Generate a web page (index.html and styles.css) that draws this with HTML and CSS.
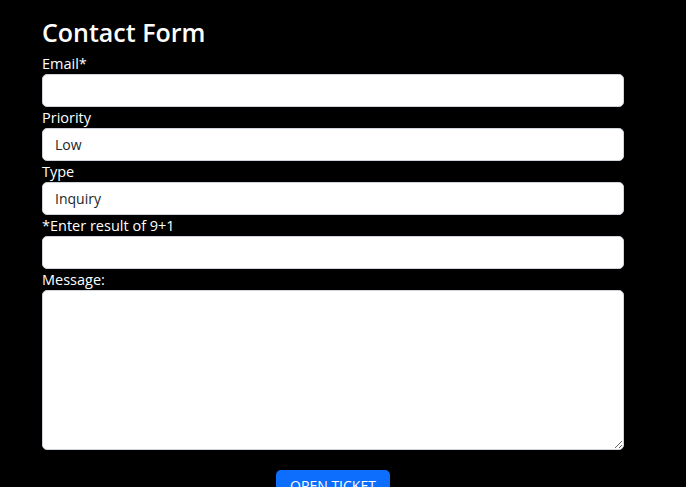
FILE: index.html
```html
<!DOCTYPE html>
<html lang="en">
<head>
    <meta charset="UTF-8">
    <meta name="viewport" content="width=device-width, initial-scale=1.0">
    <title>Contact Form</title>
    <link rel="stylesheet" href="styles.css">
</head>
<body>
    <div class="container">
        <h1>Contact Form</h1>
        <form class="contact-form">
            <label for="email">Email*</label>
            <input type="email" id="email" name="email">

            <label for="priority">Priority</label>
            <select id="priority" name="priority">
                <option>Low</option>
                <option>Medium</option>
                <option>High</option>
            </select>

            <label for="type">Type</label>
            <select id="type" name="type">
                <option>Inquiry</option>
                <option>Support</option>
            </select>

            <label for="captcha">*Enter result of 9+1</label>
            <input type="text" id="captcha" name="captcha">

            <label for="message">Message:</label>
            <textarea id="message" name="message"></textarea>

            <div class="actions">
                <button type="submit">OPEN TICKET</button>
            </div>
        </form>
    </div>
</body>
</html>
```

FILE: styles.css
```css
body {
    font-family: "Open Sans", "Noto Sans", sans-serif;
    background-color: #000;
    color: #fff;
    margin: 0;
    padding: 0;
}
.container {
    width: 582px;
    margin-left: 42px;
    padding-top: 15px;
}
h1 {
    font-size: 25px;
    font-weight: 600;
    line-height: 34px;
    margin: 0 0 4px 0;
}
.contact-form label {
    display: block;
    font-size: 14.5px;
    line-height: 21px;
}
.contact-form input,
.contact-form select,
.contact-form textarea {
    display: block;
    width: 100%;
    box-sizing: border-box;
    height: 33px;
    padding: 4px 12px;
    font-family: inherit;
    font-size: 14px;
    color: #212529;
    background-color: #fff;
    border: 1px solid #ced4da;
    border-radius: 5px;
    margin: 0;
    -webkit-appearance: none;
    appearance: none;
}
.contact-form textarea {
    height: 160px;
    resize: vertical;
}
.actions {
    display: flex;
    justify-content: center;
    margin-top: 20px;
}
.actions button {
    background-color: #0d6efd;
    color: #fff;
    border: none;
    border-radius: 5px;
    padding: 6px 12px;
    width: 114px;
    font-family: inherit;
    font-size: 14px;
    cursor: pointer;
}
```
